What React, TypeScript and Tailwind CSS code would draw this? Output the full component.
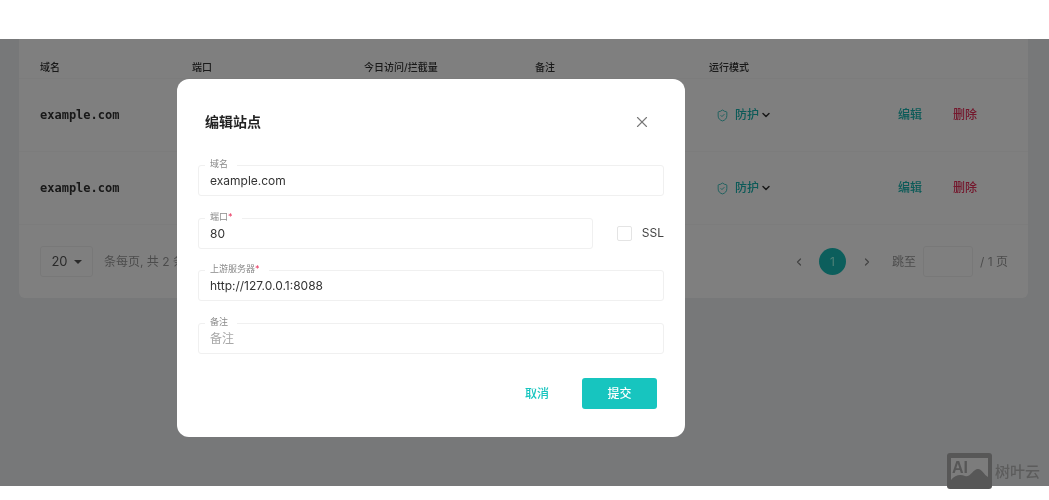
import { ChevronDown, ChevronLeft, ChevronRight, ShieldCheck, X } from "lucide-react";

const CJK = "font-['Inter','Noto_Sans_CJK_SC',sans-serif]";

/* ── Table row ────────────────────────────────────────────────── */
function SiteRow() {
  return (
    <div className="grid h-[73px] grid-cols-[152px_172px_171px_174px_189px_55px_1fr] items-center border-b border-[#f8f8f8] pl-[21px] text-[12px] font-medium">
      <span className="col-span-4 font-['DejaVu_Sans_Mono',monospace] font-bold text-[#333]">example.com</span>
      <span className="flex items-center pl-[7px] text-[#19b5b0]">
        <ShieldCheck className="mr-[6px] h-[13px] w-[13px]" strokeWidth={1.5} />
        防护
        <ChevronDown className="ml-[1px] h-[12px] w-[12px] text-[#333]" strokeWidth={3} />
      </span>
      <span className="text-[#19b5b0]">编辑</span>
      <span className="text-[#e8305a]">删除</span>
    </div>
  );
}

/* ── Outlined field with label sitting on the border ──────────── */
function Field({ label, value, required, placeholder }: { label: string; value?: string; required?: boolean; placeholder?: string }) {
  return (
    <div className="relative flex h-[31px] w-full items-center rounded-[3px] border border-[#f0f0f0] px-[11px] pt-[1px] text-[12px] text-[#333]">
      <span className="absolute top-[-9px] left-[6px] flex bg-white px-[5px] text-[9px] leading-[13px] text-[#8a8a8a]">
        {label}
        {required && <span className="text-[#e8305a]">*</span>}
        <span className="w-[4px]" />
      </span>
      {placeholder ? <span className="text-[#a8a8a8]">{placeholder}</span> : value}
    </div>
  );
}

/* ── Watermark logo, drawn ────────────────────────────────────── */
function Watermark() {
  return (
    <div className="absolute top-[414px] left-[947px] flex items-center gap-[3px]">
      <svg width="45" height="36" viewBox="0 0 45 36">
        <rect width="45" height="36" rx="3" fill="#575757" />
        <rect x="4" y="5" width="37" height="24" fill="#7c7c7c" />
        <path d="M4 27 C8 22 13 21 18 23 C23 25 26 16 31 16 C35 16 37 22 41 24 V32 H4 Z" fill="#575757" />
        <text x="5" y="20" fontSize="16" fontWeight="700" fill="#575757" fontFamily="Liberation Sans, sans-serif">AI</text>
      </svg>
      <span className="mt-[2px] text-[15px] font-medium text-[#5c5c5c]">树叶云</span>
    </div>
  );
}

export default function App() {
  return (
    <div className={`flex h-[500px] w-[1049px] flex-col overflow-hidden bg-white blur-[0.4px] ${CJK}`}>
      <div className="h-[39px] shrink-0 bg-white" />

      <main className="relative h-[447px] shrink-0 bg-[#eef1f3]">
        {/* Site table card */}
        <div className="mr-[21px] ml-[19px] h-[259px] rounded-b-md bg-white">
          <div className="grid h-[40px] grid-cols-[152px_172px_171px_174px_1fr] items-end border-b border-[#f8f8f8] pb-[3px] pl-[21px] text-[10px] font-medium text-[#333]">
            <span>域名</span>
            <span>端口</span>
            <span>今日访问/拦截量</span>
            <span>备注</span>
            <span>运行模式</span>
          </div>
          <SiteRow />
          <SiteRow />

          {/* Pagination */}
          <div className="flex h-[73px] items-center justify-between pr-[20px] pl-[21px] text-[12px] text-[#999]">
            <div className="flex items-center gap-[11px]">
              <span className="flex h-[31px] w-[53px] items-center justify-center gap-[6px] rounded-[3px] border border-[#f0f0f0] text-[13px] text-[#555]">
                20
                <span className="h-0 w-0 border-x-[4px] border-t-[4px] border-x-transparent border-t-[#555]" />
              </span>
              <span>条每页, 共 2 条</span>
            </div>
            <div className="flex items-center">
              <ChevronLeft className="h-[12px] w-[12px] text-[#888]" strokeWidth={2.5} />
              <span className="ml-[14px] flex h-[27px] w-[27px] items-center justify-center rounded-full bg-[#18bdb8] text-[#9fe]">1</span>
              <ChevronRight className="ml-[15px] h-[12px] w-[12px] text-[#888]" strokeWidth={2.5} />
              <span className="ml-[19px]">跳至</span>
              <span className="ml-[7px] h-[31px] w-[50px] rounded-[3px] border border-[#f0f0f0]" />
              <span className="ml-[7px]">/ 1 页</span>
            </div>
          </div>
        </div>

        {/* Dialog backdrop */}
        <div className="absolute inset-0 bg-black/50" />

        {/* Edit dialog */}
        <div className="absolute top-[40px] left-[177px] w-[508px] rounded-xl bg-white px-[21px] pt-[30px] pb-[28px]">
          <div className="flex h-[26px] items-center justify-between pr-[13px] pl-[7px]">
            <h2 className="pb-[2px] text-[14px] font-bold text-[#222]">编辑站点</h2>
            <X className="h-[18px] w-[18px] text-[#777]" strokeWidth={1.5} />
          </div>
          <div className="mt-[30px] flex flex-col gap-[21.5px]">
            <Field label="域名" value="example.com" />
            <div className="flex items-center">
              <Field label="端口" value="80" required />
              <span className="ml-[24px] h-[15px] w-[15px] shrink-0 rounded-[2px] border border-[#e4e4e4]" />
              <span className="ml-[10px] text-[12px] text-[#444]">SSL</span>
            </div>
            <Field label="上游服务器" value="http://127.0.0.1:8088" required />
            <Field label="备注" placeholder="备注" />
          </div>
          <div className="mt-[24px] flex items-center justify-end gap-[33px] pr-[7px]">
            <span className="pt-[2px] text-[12px] font-medium text-[#17c5bf]">取消</span>
            <button className="h-[31px] w-[75px] rounded-[3px] bg-[#17c5bf] pt-[2px] text-[12px] font-medium text-white">提交</button>
          </div>
        </div>

        <Watermark />
      </main>

      <div className="flex-1 bg-white" />
    </div>
  );
}
